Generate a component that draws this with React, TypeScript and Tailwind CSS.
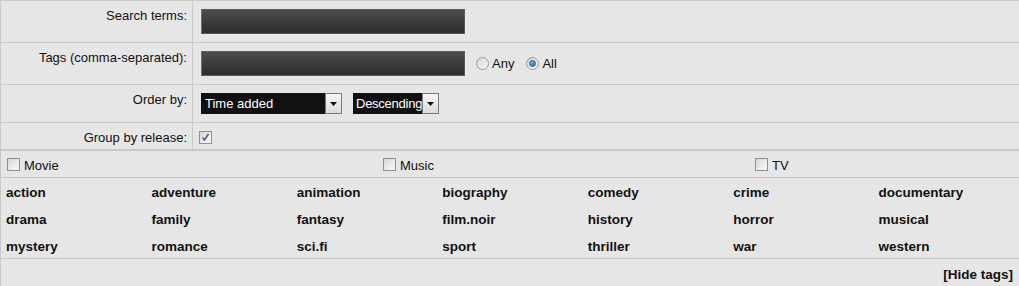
import React from 'react';

const tags = [
  'action', 'adventure', 'animation', 'biography', 'comedy', 'crime', 'documentary',
  'drama', 'family', 'fantasy', 'film.noir', 'history', 'horror', 'musical',
  'mystery', 'romance', 'sci.fi', 'sport', 'thriller', 'war', 'western',
];

function Checkbox({ checked = false }: { checked?: boolean }) {
  return (
    <span className="relative inline-block w-[13px] h-[13px] shrink-0 border border-[#8e8f8f] bg-gradient-to-br from-[#d6d6d6] to-[#fbfbfb]">
      {checked && (
        <svg className="absolute left-[1px] top-[1px]" width="9" height="9" viewBox="0 0 9 9">
          <path d="M1.5 4.5 L3.5 7 L7.5 1" fill="none" stroke="#4a5894" strokeWidth="1.6" />
        </svg>
      )}
    </span>
  );
}

function Radio({ checked = false }: { checked?: boolean }) {
  return (
    <span className="relative inline-flex items-center justify-center w-[13px] h-[13px] shrink-0 rounded-full border border-[#9c9c9c] bg-gradient-to-br from-[#d4d4d4] to-[#fbfbfb]">
      {checked && <span className="w-[7px] h-[7px] rounded-full bg-gradient-to-br from-[#7cc0f0] to-[#1c6cb8] border border-[#2a5a8a]" />}
    </span>
  );
}

function Select({ value, width, tight = false }: { value: string; width: string; tight?: boolean }) {
  return (
    <div className={`flex h-[21px] bg-[#111111] ${width}`}>
      <span className={`flex-1 whitespace-nowrap pt-[3px] text-white ${tight ? 'pl-[3px] tracking-[-0.25px]' : 'pl-[4px]'}`}>{value}</span>
      <span className="flex items-center justify-center w-[17px] h-[21px] shrink-0 border border-[#7a7a7a] bg-gradient-to-b from-[#f6f6f6] to-[#dcdcdc]">
        <svg width="7" height="4" viewBox="0 0 7 4">
          <path d="M0 0 H7 L3.5 4 Z" fill="#111" />
        </svg>
      </span>
    </div>
  );
}

function TextInput() {
  return <div className="w-[264px] h-[25px] border border-[#5a5a5a] border-l-[#707070] bg-gradient-to-b from-[#4c4c4c] to-[#2d2d2d]" />;
}

function Row({ label, height, children }: { label: string; height: string; children?: React.ReactNode }) {
  return (
    <div className={`flex border-b border-[#c8c8c8] ${height}`}>
      <div className="w-[192px] shrink-0 border-r border-[#c8c8c8] pt-[7px] pr-[5px] text-right">{label}</div>
      <div className="flex items-start gap-[11px] pt-[8px] pl-[8px]">{children}</div>
    </div>
  );
}

export default function App() {
  return (
    <div className="w-[1019px] h-[286px] overflow-hidden bg-[#e6e6e6] text-[#111] font-['Liberation_Sans',Arial,sans-serif] text-[13px] leading-[15px]">
      {/* search form */}
      <div className="border-t border-l border-[#c8c8c8]">
        <Row label="Search terms:" height="h-[42px]">
          <TextInput />
        </Row>
        <Row label="Tags (comma-separated):" height="h-[42px]">
          <TextInput />
          <div className="flex items-center h-[25px] gap-[3px]">
            <Radio />
            <span className="mr-[9px]">Any</span>
            <Radio checked />
            <span>All</span>
          </div>
        </Row>
        <Row label="Order by:" height="h-[38px]">
          <Select value="Time added" width="w-[141px]" />
          <Select value="Descending" width="w-[86px]" tight />
        </Row>
        <Row label="Group by release:" height="h-[27px]">
          <span className="-ml-[2px]">
            <Checkbox checked />
          </span>
        </Row>
      </div>

      {/* media types */}
      <div className="border-t border-l border-[#c8c8c8]">
        <div className="grid grid-cols-[376px_372px_1fr] h-[27px] border-b border-[#c8c8c8] pt-[7px]">
          {['Movie', 'Music', 'TV'].map((m) => (
            <label key={m} className="flex items-center gap-[4px] pl-[6px] h-[13px]">
              <Checkbox />
              <span className="pt-[2px]">{m}</span>
            </label>
          ))}
        </div>

        {/* tag cloud */}
        <div className="grid grid-cols-7 grid-rows-[27px_27px_26px] border-b border-[#c8c8c8]">
          {tags.map((t) => (
            <a key={t} className="pl-[5px] pt-[7px] font-bold text-[13.5px] text-[#111] cursor-pointer">
              {t}
            </a>
          ))}
        </div>

        <div className="flex justify-end h-[27px] pt-[8px] pr-[6px]">
          <a className="font-bold text-[13.5px] cursor-pointer">[Hide tags]</a>
        </div>
      </div>
    </div>
  );
}
